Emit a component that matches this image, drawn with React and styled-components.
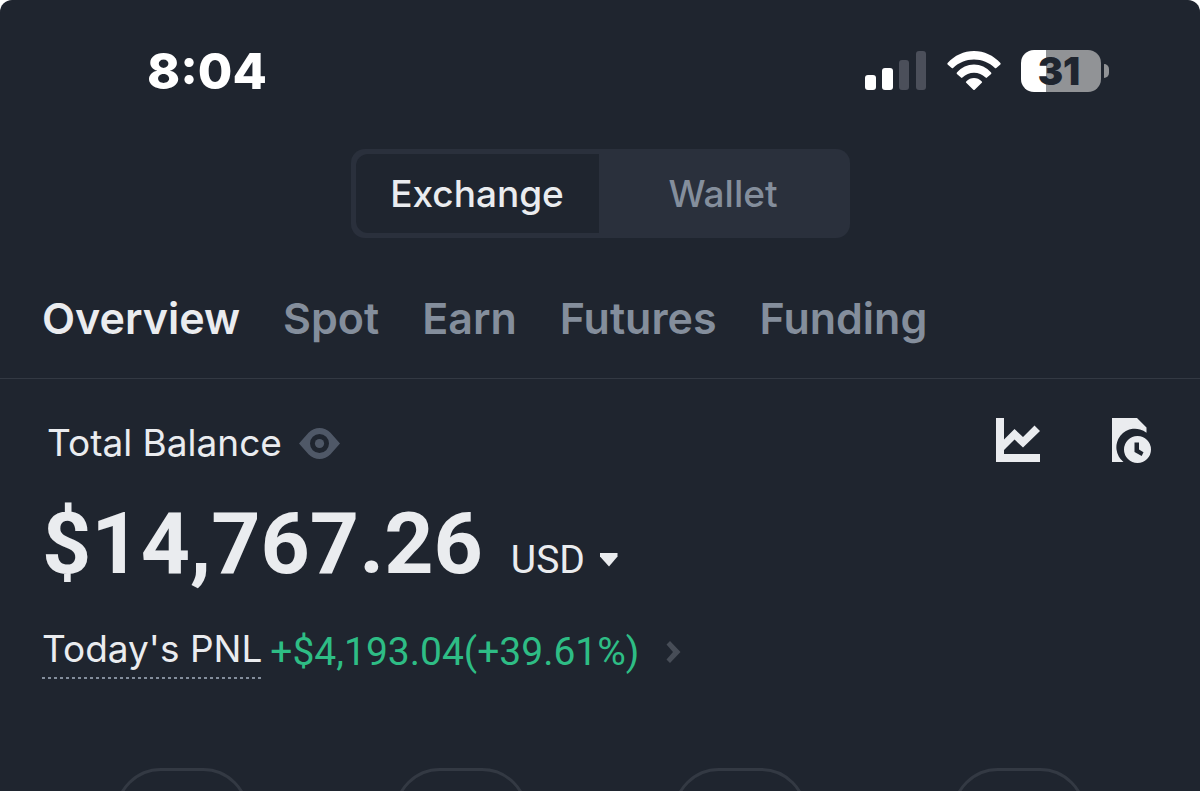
import React, { useState } from "react";
import styled, { createGlobalStyle } from "styled-components";

const GlobalStyle = createGlobalStyle`
  * {
    box-sizing: border-box;
  }
  body {
    margin: 0;
    background: #ffffff;
    font-family: Inter, "Liberation Sans", sans-serif;
  }
  button {
    font-family: inherit;
    border: none;
    background: none;
    padding: 0;
    cursor: pointer;
  }
  svg {
    display: block;
  }
`;

const Screen = styled.div`
  height: 100vh;
  overflow: hidden;
  background: #1f252f;
  color: #eaecef;
  border-radius: 12px 12px 0 0;
`;

const StatusBar = styled.header`
  display: flex;
  align-items: center;
  justify-content: space-between;
  height: 62px;
  margin-top: 40px;
  padding: 0 91px 0 147px;
  color: #ffffff;
`;

const Time = styled.time`
  font-size: 50px;
  font-weight: 800;
  line-height: 64px;
`;

const StatusIcons = styled.div`
  display: flex;
  align-items: center;
  gap: 20px;
`;

const Battery = styled.div`
  display: flex;
  align-items: center;
  gap: 3px;
`;

const BatteryBody = styled.div`
  width: 80px;
  height: 42px;
  padding-right: 4px;
  border-radius: 13px;
  background: linear-gradient(
    to right,
    #ffffff ${({ $level }) => $level}%,
    #919396 ${({ $level }) => $level}%
  );
  color: #1f252f;
  font-size: 38px;
  font-weight: 900;
  line-height: 42px;
  text-align: center;
`;

const BatteryTip = styled.div`
  width: 5px;
  height: 14px;
  border-radius: 0 5px 5px 0;
  background: #919396;
`;

const Switch = styled.div`
  display: flex;
  gap: 3px;
  width: 42%;
  max-width: 499px;
  margin: 47px auto 0;
  padding: 5px;
  border-radius: 14px;
  background: #2a303c;
`;

const SwitchButton = styled.button`
  flex: 1;
  height: 79px;
  border-radius: 12px 0 0 12px;
  background: ${({ $active }) => ($active ? "#1f252f" : "transparent")};
  color: ${({ $active }) => ($active ? "#eaecef" : "#848e9c")};
  font-size: 37px;
  font-weight: 500;
  line-height: 48px;
`;

const Tabs = styled.nav`
  display: flex;
  gap: 43px;
  padding: 52px 42px 32px;
  border-bottom: 1px solid #333943;
`;

const Tab = styled.a`
  color: ${({ $active }) => ($active ? "#eaecef" : "#848e9c")};
  font-size: 43px;
  font-weight: 600;
  line-height: 56px;
  text-decoration: none;
`;

const Main = styled.main`
  padding: 36px 42px 0;
`;

const Row = styled.div`
  display: flex;
  align-items: center;
`;

const BalanceRow = styled(Row)`
  align-items: flex-start;
  justify-content: space-between;
  padding: 0 6px 0 5px;
`;

const Label = styled.span`
  font-size: 37px;
  line-height: 56px;
`;

const IconButton = styled.button`
  color: ${({ $muted }) => ($muted ? "#4f5867" : "#eaecef")};
`;

const LabelGroup = styled(Row)`
  gap: 17px;
`;

const IconGroup = styled.div`
  display: flex;
  align-items: flex-start;
  gap: 71px;
  padding-top: 3px;
`;

const AmountRow = styled.div`
  display: flex;
  align-items: baseline;
  gap: 28px;
  margin-top: 21px;
`;

const Amount = styled.strong`
  font-family: Roboto, "Liberation Sans", sans-serif;
  font-size: 86px;
  font-weight: 700;
  line-height: 104px;
`;

const Currency = styled.button`
  display: flex;
  align-items: center;
  gap: 14px;
  color: #eaecef;
  font-family: Roboto, "Liberation Sans", sans-serif;
  font-size: 39px;
  font-weight: 400;
  line-height: 48px;
`;

const PnlRow = styled(Row)`
  gap: 8px;
  margin-top: 29px;
`;

const PnlLabel = styled.span`
  padding-bottom: 6px;
  background: repeating-linear-gradient(
      to right,
      #848e9c 0 3px,
      transparent 3px 6px
    )
    bottom / 100% 2px no-repeat;
  font-size: 37px;
  line-height: 48px;
`;

const PnlLink = styled.a`
  display: flex;
  align-items: center;
  gap: 27px;
  color: #2ebd85;
  font-family: Roboto, "Liberation Sans", sans-serif;
  font-size: 39px;
  line-height: 48px;
  text-decoration: none;
`;

const Actions = styled.div`
  display: grid;
  grid-template-columns: repeat(4, 1fr);
  justify-items: center;
  margin-top: 89px;
`;

const ActionButton = styled.button`
  width: 134px;
  height: 92px;
  border: 3px solid #333943;
  border-radius: 46px;
`;

const SignalIcon = () => (
  <svg width="62" height="40" viewBox="0 0 62 40" fill="#ffffff">
    <rect x="0" y="24" width="11" height="15" rx="3" />
    <rect x="17" y="17" width="11" height="22" rx="3" />
    <rect x="34" y="9" width="10" height="30" rx="3" fill="#4b4f5a" />
    <rect x="51" y="0" width="10" height="39" rx="3" fill="#4b4f5a" />
  </svg>
);

const WifiIcon = () => (
  <svg width="54" height="40" viewBox="0 0 54 40" fill="#ffffff">
    <path d="M.6 12C7.6 4.400 16.800 0 27 0S46.400 4.400 53.400 12Q54 12.700 53.400 13.400L49.300 17Q48.600 17.600 47.900 17C42.100 11.500 35.200 8.500 27 8.500S11.900 11.500 6.100 17Q5.400 17.600 4.700 17L.6 13.400Q0 12.700 .6 12Z" />
    <path d="M9.900 21.600C14.600 16.400 20.500 13.600 27 13.600S39.400 16.400 44.100 21.600Q44.700 22.300 44.100 23L40 26.600Q39.300 27.200 38.600 26.600C35.200 23.400 31.500 21.800 27 21.800S18.800 23.400 15.400 26.600Q14.700 27.200 14 26.600L9.900 23Q9.300 22.300 9.900 21.600Z" />
    <path d="M19.200 30.400C23.600 25.900 30.400 25.900 34.800 30.400Q35.500 31.100 34.800 31.800L27.700 38.700Q27 39.300 26.300 38.700L19.200 31.800Q18.500 31.100 19.200 30.400Z" />
  </svg>
);

const EyeIcon = () => (
  <svg width="41" height="31" viewBox="0 0 41 31" fill="currentColor">
    <path
      fillRule="evenodd"
      d="M0 15.500 9.500 4.800C15.500-1.500 25.500-1.500 31.500 4.800L41 15.500 31.500 26.200C25.500 32.500 15.500 32.500 9.500 26.200ZM20.500 6A9.500 9.500 0 1 0 20.500 25A9.500 9.500 0 1 0 20.500 6Z"
    />
    <circle cx="20.500" cy="15.500" r="4.600" />
  </svg>
);

const ChartIcon = () => (
  <svg width="45" height="44" viewBox="0 0 45 44" fill="currentColor">
    <path d="M0 0H8V21.500L18.500 11 27 19 38.500 7.500 44 13 27 29.500 18.500 21.500 8 32V36H44V44H0Z" />
  </svg>
);

const HistoryIcon = () => (
  <svg width="40" height="45" viewBox="0 0 40 45" fill="currentColor">
    <path d="M0 0H25L34.500 9.500V14.700A18 18 0 0 0 11.500 44H0Z" />
    <path
      fillRule="evenodd"
      d="M25.500 18A13.500 13.500 0 1 0 25.500 45A13.500 13.500 0 1 0 25.500 18ZM22.500 24.500H27V31.500L31.500 34.200 29.700 38 22.500 34Z"
    />
  </svg>
);

const CaretIcon = () => (
  <svg width="20" height="14" viewBox="0 0 20 14" fill="currentColor">
    <path d="M1 0H18.500V3.500L10 13.500 1 3.500Z" />
  </svg>
);

const ChevronIcon = () => (
  <svg width="15" height="22" viewBox="0 0 15 22" fill="#474d57">
    <path d="M4 0 14.500 11 4 22 .5 18.500 7 11 .5 3.500Z" />
  </svg>
);

const accounts = ["Exchange", "Wallet"];
const tabs = ["Overview", "Spot", "Earn", "Futures", "Funding"];
const actions = [0, 1, 2, 3];

const App = () => {
  const [account, setAccount] = useState("Exchange");
  const [tab, setTab] = useState("Overview");

  return (
    <>
      <GlobalStyle />
      <Screen>
        <StatusBar>
          <Time>8:04</Time>
          <StatusIcons>
            <SignalIcon />
            <WifiIcon />
            <Battery>
              <BatteryBody $level={31}>31</BatteryBody>
              <BatteryTip />
            </Battery>
          </StatusIcons>
        </StatusBar>

        <Switch>
          {accounts.map((name) => (
            <SwitchButton
              key={name}
              $active={name === account}
              onClick={() => setAccount(name)}
            >
              {name}
            </SwitchButton>
          ))}
        </Switch>

        <Tabs>
          {tabs.map((name) => (
            <Tab
              key={name}
              href="#"
              $active={name === tab}
              onClick={() => setTab(name)}
            >
              {name}
            </Tab>
          ))}
        </Tabs>

        <Main>
          <BalanceRow>
            <LabelGroup>
              <Label>Total Balance</Label>
              <IconButton $muted aria-label="Hide balance">
                <EyeIcon />
              </IconButton>
            </LabelGroup>
            <IconGroup>
              <IconButton aria-label="Analysis">
                <ChartIcon />
              </IconButton>
              <IconButton aria-label="History">
                <HistoryIcon />
              </IconButton>
            </IconGroup>
          </BalanceRow>

          <AmountRow>
            <Amount>$14,767.26</Amount>
            <Currency>
              USD
              <CaretIcon />
            </Currency>
          </AmountRow>

          <PnlRow>
            <PnlLabel>Today's PNL</PnlLabel>
            <PnlLink href="#">
              +$4,193.04(+39.61%)
              <ChevronIcon />
            </PnlLink>
          </PnlRow>

          <Actions>
            {actions.map((id) => (
              <ActionButton key={id} aria-label="Action" />
            ))}
          </Actions>
        </Main>
      </Screen>
    </>
  );
};

export default App;
